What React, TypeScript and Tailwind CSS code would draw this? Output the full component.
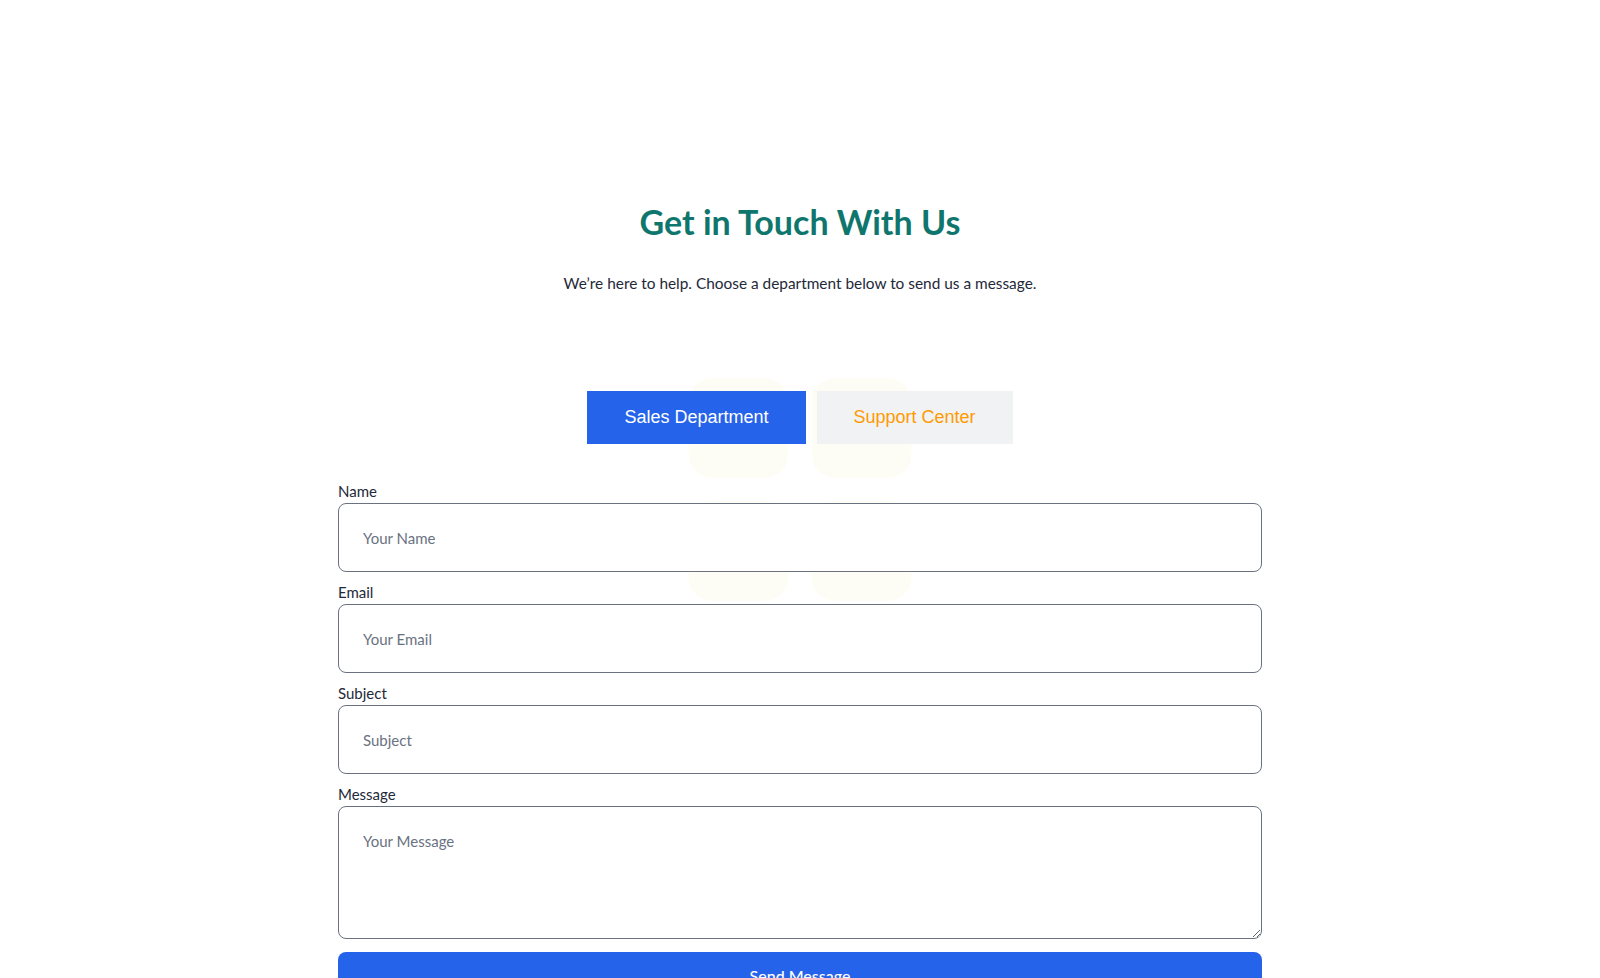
import { useState } from "react";

const fields = [
  { id: "name", label: "Name", placeholder: "Your Name", type: "text" },
  { id: "email", label: "Email", placeholder: "Your Email", type: "email" },
  { id: "subject", label: "Subject", placeholder: "Subject", type: "text" },
];

export default function App() {
  const [dept, setDept] = useState<"sales" | "support">("sales");

  return (
    <div className="min-h-screen bg-white font-['Lato',sans-serif] text-gray-800">
      <section className="mx-auto max-w-[924px] pt-[202px] pb-16">
        <h1 className="text-center text-[34px] leading-10 font-bold text-[#0f766e]">
          Get in Touch With Us
        </h1>
        <p className="mt-[29px] text-center text-[15.4px] leading-6 text-gray-800">
          We’re here to help. Choose a department below to send us a message.
        </p>

        {/* department tabs, faint tiles behind */}
        <div className="relative mt-[96px]">
          <div className="pointer-events-none absolute left-1/2 top-[-13px] grid -translate-x-1/2 grid-cols-[100px_100px] gap-[23px]">
            <div className="h-[100px] rounded-3xl bg-[#fefdf5]" />
            <div className="h-[100px] rounded-3xl bg-[#fefdf5]" />
            <div className="h-[100px] rounded-3xl bg-[#fefdf5]" />
            <div className="h-[100px] rounded-3xl bg-[#fefdf5]" />
          </div>
          <div className="relative flex justify-center gap-[11px] font-['Liberation_Sans',Arial,sans-serif] text-lg">
            <button
              onClick={() => setDept("sales")}
              className={`border px-[36px] py-3 leading-[27px] ${
                dept === "sales"
                  ? "border-[#2563eb] bg-[#2563eb] text-white"
                  : "border-[#f1f2f4] bg-[#f1f2f4] text-amber-500"
              }`}
            >
              Sales Department
            </button>
            <button
              onClick={() => setDept("support")}
              className={`border px-[36px] py-3 leading-[27px] ${
                dept === "support"
                  ? "border-[#2563eb] bg-[#2563eb] text-white"
                  : "border-[#f1f2f4] bg-[#f1f2f4] text-amber-500"
              }`}
            >
              Support Center
            </button>
          </div>
        </div>

        <form className="relative mt-[35px] flex flex-col gap-2" onSubmit={(e) => e.preventDefault()}>
          {fields.map((f) => (
            <div key={f.id}>
              <label htmlFor={f.id} className="block text-[15px] leading-6 text-gray-800">
                {f.label}
              </label>
              <input
                id={f.id}
                type={f.type}
                placeholder={f.placeholder}
                className="block h-[69px] w-full rounded-lg border border-gray-500 bg-white px-6 text-[15px] placeholder:text-gray-500 focus:outline-none"
              />
            </div>
          ))}
          <div>
            <label htmlFor="message" className="block text-[15px] leading-6 text-gray-800">
              Message
            </label>
            <textarea
              id="message"
              placeholder="Your Message"
              className="block h-[133px] w-full rounded-lg border border-gray-500 bg-white px-6 py-6 text-[15px] leading-5 placeholder:text-gray-500 focus:outline-none"
            />
          </div>
          <button
            type="submit"
            className="mt-[5px] w-full rounded-lg bg-[#2563eb] py-3 text-base font-medium text-white"
          >
            Send Message
          </button>
        </form>
      </section>
    </div>
  );
}
